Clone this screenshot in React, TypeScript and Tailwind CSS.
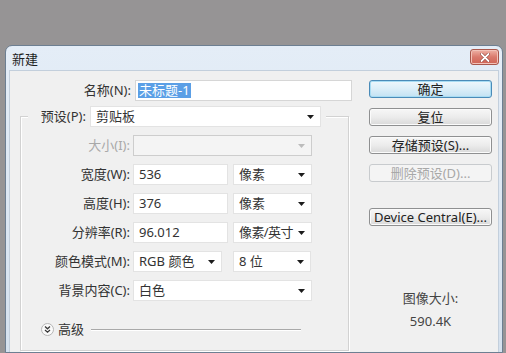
import type { ReactNode } from 'react';
import clsx from 'clsx';

function Caret({ disabled = false }: { disabled?: boolean }) {
  return (
    <svg width="7" height="4" viewBox="0 0 7 4" className="shrink-0">
      <path d="M0 0h7L3.5 4z" fill={disabled ? '#bcbcbc' : '#1c1c1c'} />
    </svg>
  );
}

function Select({
  value,
  className,
  disabled = false,
}: {
  value?: string;
  className?: string;
  disabled?: boolean;
}) {
  return (
    <div
      className={clsx(
        'flex h-[21px] items-center justify-between gap-[3px] border pl-[5px] pr-[6px]',
        disabled ? 'border-[#cdcdcd] bg-[#f4f4f4]' : 'border-[#e3e3e3] bg-white',
        className,
      )}
    >
      <span className="whitespace-nowrap leading-none">{value}</span>
      <Caret disabled={disabled} />
    </div>
  );
}

function TextBox({ value, className }: { value: string; className?: string }) {
  return (
    <div
      className={clsx(
        'flex h-[21px] items-center border border-[#e3e3e3] bg-white pl-[5px]',
        className,
      )}
    >
      <span className="leading-none">{value}</span>
    </div>
  );
}

function Row({ label, children, disabled = false }: { label: string; children: ReactNode; disabled?: boolean }) {
  return (
    <div className="mt-[8px] flex items-center gap-[3px]">
      <span className={clsx('w-[109px] whitespace-nowrap text-right', disabled ? 'text-[#a9a9a9]' : 'text-[#333]')}>
        {label}
      </span>
      {children}
    </div>
  );
}

function DialogButton({
  children,
  variant = 'normal',
  className,
}: {
  children: ReactNode;
  variant?: 'default' | 'normal' | 'disabled';
  className?: string;
}) {
  return (
    <div
      className={clsx(
        'flex h-[18px] items-center justify-center whitespace-nowrap rounded-[3px] border leading-none',
        variant === 'default' &&
          'border-[#4a8bb8] bg-linear-to-b from-[#eef7fc] via-[#dbeef8] to-[#c2e2f3] text-[#222] shadow-[inset_0_0_0_1px_#a8dcf3]',
        variant === 'normal' &&
          'border-[#8f9091] bg-linear-to-b from-[#f7f7f7] via-[#ececec] to-[#d9d9d9] text-[#222] shadow-[inset_0_0_0_1px_#fbfbfb]',
        variant === 'disabled' && 'border-[#c8cbce] bg-[#f4f4f4] text-[#a8a8a8]',
        className,
      )}
    >
      {children}
    </div>
  );
}

function AdvancedIcon() {
  return (
    <svg width="13" height="13" viewBox="0 0 13 13" className="shrink-0">
      <circle cx="6.5" cy="6.5" r="6" fill="#fafafa" stroke="#b5b5b5" />
      <path d="M4 3.6l2.5 2.2L9 3.6M4 7l2.5 2.2L9 7" fill="none" stroke="#3a3a3a" strokeWidth="1.3" />
    </svg>
  );
}

function CloseButton() {
  return (
    <div className="mt-[3px] flex h-[16px] w-[29px] items-center justify-center rounded-[3px] border border-[#a8574c] bg-linear-to-b from-[#eeb2a6] via-[#da7a6d] to-[#cf6557] shadow-[inset_0_0_0_1px_#f2c2b8]">
      <svg width="10" height="9" viewBox="0 0 10 9">
        <path d="M1.5 1l7 7M8.5 1l-7 7" stroke="#8a3a30" strokeWidth="3" strokeLinecap="round" />
        <path d="M1.5 1l7 7M8.5 1l-7 7" stroke="#ffffff" strokeWidth="1.8" strokeLinecap="round" />
      </svg>
    </div>
  );
}

export default function App() {
  return (
    <div className="h-[353px] w-[506px] overflow-hidden bg-[#969495] pl-[5px] pt-[45px] font-['Noto_Sans','Noto_Sans_CJK_SC',sans-serif] text-[13px] text-[#333]">
      <div className="flex h-[308px] w-[498px] flex-col rounded-t-[7px] border border-[#6d7f92] bg-linear-to-b from-[#e4edf7] to-[#d5e1ee] px-[3px]">
        <div className="flex h-[24px] shrink-0 items-start justify-between">
          <span className="mt-[4px] pl-[3px] text-[#1e1e1e]">新建</span>
          <CloseButton />
        </div>

        <div className="flex flex-1 border border-b-0 border-[#c3cfdc] bg-[#f0f0f0]">
          <div className="w-[342px] shrink-0">
            <div className="mt-[9px] flex items-center gap-[4px]">
              <span className="w-[121px] whitespace-nowrap text-right">名称(N):</span>
              <div className="flex h-[21px] w-[217px] items-center border border-[#d6d6d6] bg-white pl-[2px]">
                <span className="bg-[#5b9fe6] px-[1px] leading-[15px] text-white">未标题-1</span>
              </div>
            </div>

            <div className="ml-[10px] mt-[15px] h-[235px] w-[329px] border border-[#d2d2d2] shadow-[inset_1px_1px_0_#ffffff,1px_1px_0_#ffffff]">
              <div className="-mt-[11px] ml-[7px] flex w-[298px] items-center gap-[4px] bg-[#f0f0f0] pl-[8px] pr-[5px]">
                <span className="w-[50px] whitespace-nowrap text-right">预设(P):</span>
                <Select value="剪贴板" className="w-[231px] pl-[4px]" />
              </div>

              <Row label="大小(I):" disabled>
                <Select disabled className="w-[179px]" />
              </Row>
              <Row label="宽度(W):">
                <TextBox value="536" className="w-[95px]" />
                <Select value="像素" className="ml-[2px] w-[79px]" />
              </Row>
              <Row label="高度(H):">
                <TextBox value="376" className="w-[95px]" />
                <Select value="像素" className="ml-[2px] w-[79px]" />
              </Row>
              <Row label="分辨率(R):">
                <TextBox value="96.012" className="w-[95px]" />
                <Select value="像素/英寸" className="ml-[2px] w-[79px] pl-[3px] pr-[5px] tracking-[-0.6px]" />
              </Row>
              <Row label="颜色模式(M):">
                <Select value="RGB 颜色" className="w-[89px]" />
                <Select value="8 位" className="ml-[8px] w-[78px]" />
              </Row>
              <Row label="背景内容(C):">
                <Select value="白色" className="w-[179px]" />
              </Row>

              <div className="ml-[20px] mt-[19px] flex items-center">
                <AdvancedIcon />
                <span className="ml-[4px]">高级</span>
                <div className="ml-[7px] h-px w-[210px] bg-[#a9a9a9] shadow-[0_1px_0_#ffffff]" />
              </div>
            </div>
          </div>

          <div className="ml-[17px] flex w-[123px] shrink-0 flex-col">
            <DialogButton variant="default" className="mt-[9px]">
              确定
            </DialogButton>
            <DialogButton className="mt-[10px]">复位</DialogButton>
            <DialogButton className="mt-[10px]">存储预设(S)...</DialogButton>
            <DialogButton variant="disabled" className="mt-[10px]">
              删除预设(D)...
            </DialogButton>
            <DialogButton className="mt-[26px]">Device Central(E)...</DialogButton>

            <p className="mt-[64px] text-center leading-[17px] text-[#444]">图像大小:</p>
            <p className="mt-[6px] text-center leading-[17px] text-[#444]">590.4K</p>
          </div>
        </div>
      </div>
    </div>
  );
}
